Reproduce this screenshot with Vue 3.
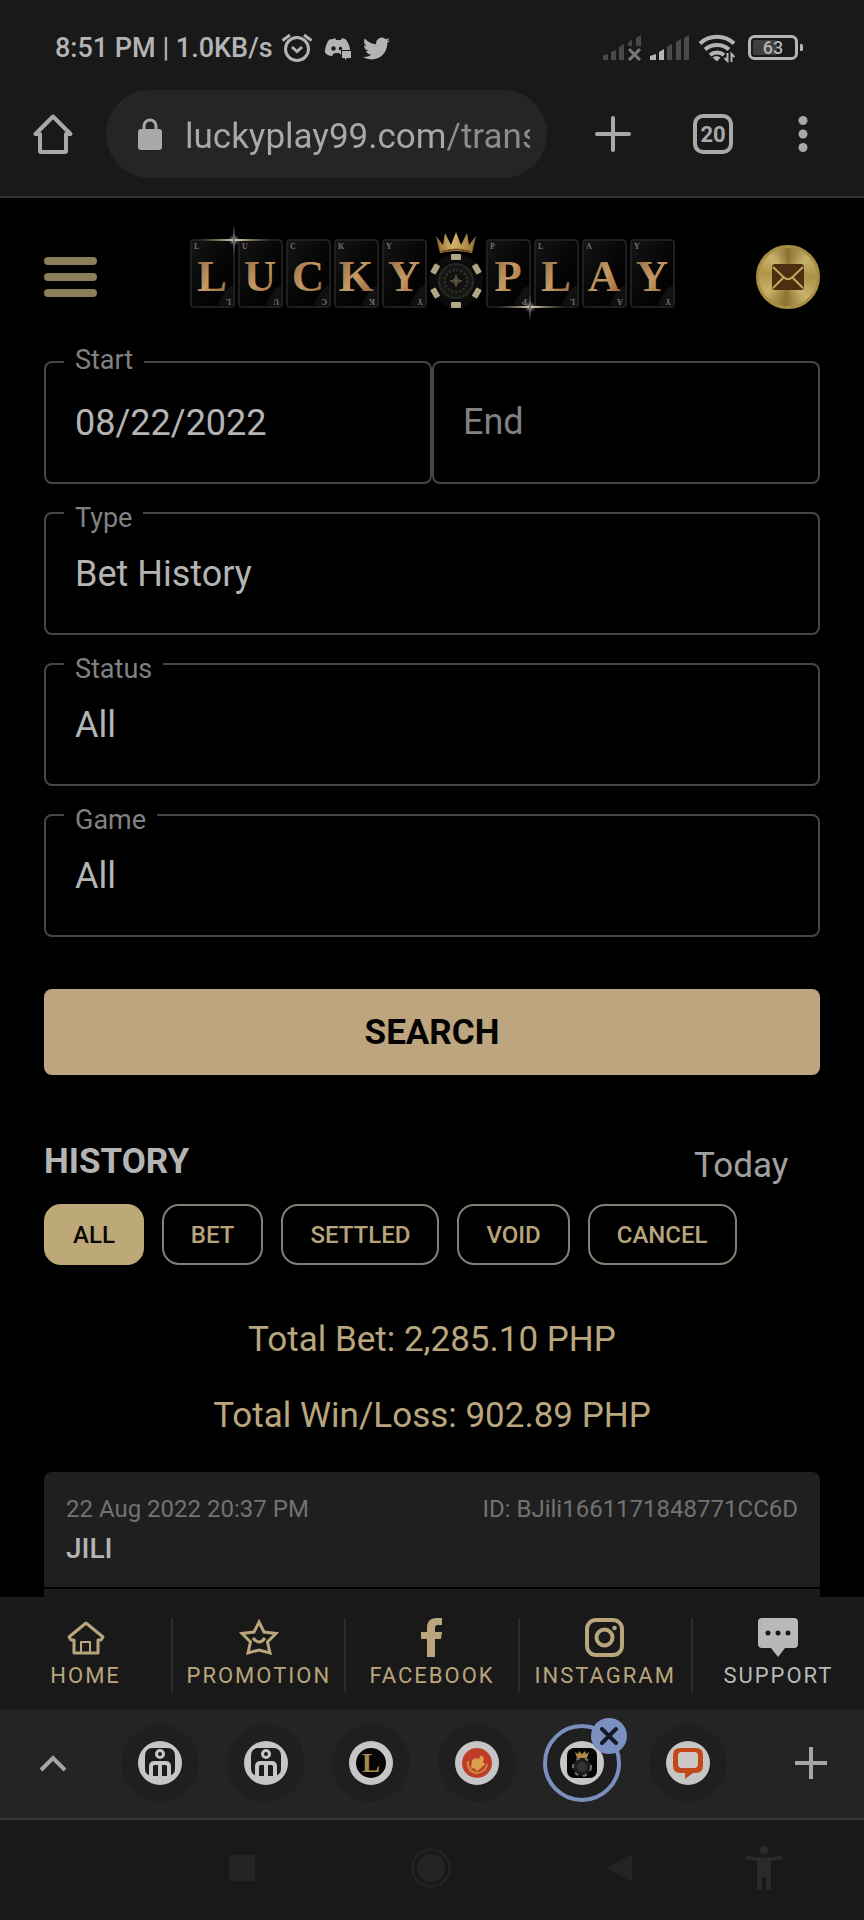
<script setup>
import { ref } from 'vue'

const address = ref('luckyplay99.com/transaction-history')
const start = ref('08/22/2022')
const end = ref('')
const period = ref('Today')

const selects = ref([
  { id: 'type', label: 'Type', value: 'Bet History', options: ['Bet History', 'Deposit', 'Withdrawal'] },
  { id: 'status', label: 'Status', value: 'All', options: ['All', 'Settled', 'Pending'] },
  { id: 'game', label: 'Game', value: 'All', options: ['All', 'JILI'] },
])

const filters = ['ALL', 'BET', 'SETTLED', 'VOID', 'CANCEL']
const activeFilter = ref('ALL')

const totals = [
  { label: 'Total Bet', amount: '2,285.10 PHP' },
  { label: 'Total Win/Loss', amount: '902.89 PHP' },
]

const bets = [
  { date: '22 Aug 2022 20:37 PM', id: 'BJili1661171848771CC6D', provider: 'JILI' },
]

const links = ['HOME', 'PROMOTION', 'FACEBOOK', 'INSTAGRAM', 'SUPPORT']

const tabs = [
  { id: 1, kind: 'person', title: 'Community' },
  { id: 2, kind: 'person', title: 'Community' },
  { id: 3, kind: 'letter', title: 'Lucky' },
  { id: 4, kind: 'seal', title: 'Seal' },
  { id: 5, kind: 'chip', title: 'Lucky Play' },
  { id: 6, kind: 'chat', title: 'Live chat' },
]
const activeTab = ref(5)

// cards of the logo, the poker chip sits in the gap between the two words
const cards = [...'LUCKY'].map((letter, i) => ({ letter, x: 2 + i * 48 }))
  .concat([...'PLAY'].map((letter, i) => ({ letter, x: 298 + i * 48 })))

const chipMarks = [0, 60, 120, 180, 240, 300]
</script>

<template>
  <div class="screen">
    <header class="browser">
      <div class="status-bar">
        <div class="status-left">
          <span>8:51 PM | 1.0KB/s</span>
          <svg width="32" height="30" viewBox="0 0 32 30" fill="none" stroke="currentColor" stroke-width="3">
            <circle cx="16" cy="16" r="11.5" />
            <path d="M1.500 7.500 9 2M30.500 7.500 23 2" />
            <path d="m11 14 5 4.500 5-4.500" />
          </svg>
          <svg class="discord" width="26" height="23" viewBox="0 0 26 23" fill="currentColor">
            <path d="M8 2 10 1l1 2h5l1-2 4 1.500C23.500 6 25 10 25 13h-9v5l-2-2-5 .200L7 19C4 19 1.500 17.500 0 15.500 0 10.500 2 4.500 4.500 2.500z" />
            <path d="M17 14h9v7h-4l-2 2v-2h-3z" />
            <circle cx="8.500" cy="11.500" r="2.200" fill="#191919" />
            <circle cx="15.500" cy="11.500" r="1.800" fill="#191919" />
          </svg>
          <svg class="twitter" width="27" height="23" viewBox="0 2 24 20" fill="currentColor">
            <path d="M23.950 4.570a10 10 0 0 1-2.820.770 4.960 4.960 0 0 0 2.160-2.720 9.900 9.900 0 0 1-3.120 1.180 4.920 4.920 0 0 0-8.380 4.480C7.690 8.090 4.070 6.130 1.640 3.160a4.820 4.820 0 0 0-.670 2.480c0 1.710.870 3.210 2.190 4.100a4.900 4.900 0 0 1-2.230-.620v.060a4.920 4.920 0 0 0 3.950 4.830 5 5 0 0 1-2.210.080 4.940 4.940 0 0 0 4.600 3.420A9.870 9.870 0 0 1 0 19.540a14 14 0 0 0 7.550 2.210c9.050 0 14-7.500 14-13.980 0-.210 0-.420-.020-.630a9.940 9.940 0 0 0 2.420-2.570z" />
          </svg>
        </div>
        <div class="status-right">
          <svg width="40" height="26" viewBox="0 0 40 26" fill="#484848">
            <path d="M1 20.500 6 19v6H1zM9 17l5-2v10H9zM17 12l5-3v16h-5zM26 8l4-4v7h-4zM34 3l5-3v11h-5z" />
            <path d="m27 14 11 11m0-11L27 25" stroke="#777" stroke-width="3" />
          </svg>
          <svg width="40" height="26" viewBox="0 0 40 26">
            <path d="M0 21 6 19v6H0zM9 17l5-3v11H9z" fill="#b5b5b5" />
            <path d="m17 12 5-3v16h-5zM26 7l5-3v21h-5zM34 3l5-3v25h-5z" fill="#4a4a4a" />
          </svg>
          <svg width="38" height="30" viewBox="0 0 38 30" fill="none" stroke="currentColor" stroke-width="4">
            <path d="M2 10.500a25 25 0 0 1 34 0M7 16.500a18 18 0 0 1 24 0M12 22a11 11 0 0 1 14 0" />
            <path d="m14.500 24.500 4.500 4 3.500-4a6 6 0 0 0-8 0z" fill="currentColor" stroke="none" />
            <path d="M29.500 20v8l-3-3M33.500 29v-8l3 3" stroke-width="2" />
          </svg>
          <svg class="battery" width="56" height="26" viewBox="0 0 56 26">
            <rect x="1.500" y="1.500" width="47" height="22" rx="5" fill="none" stroke="currentColor" stroke-width="3" />
            <rect x="5" y="5" width="24" height="15" rx="2" fill="#3f3f3f" />
            <path d="M52 9h1.500q1.500 0 1.500 1.500v4q0 1.500-1.500 1.500H52z" fill="currentColor" />
            <text x="25" y="19" text-anchor="middle" fill="currentColor">63</text>
          </svg>
        </div>
      </div>

      <div class="toolbar">
        <button class="icon-button" aria-label="Home page">
          <svg width="40" height="40" viewBox="0 0 40 40" fill="none" stroke="currentColor" stroke-width="4" stroke-linejoin="round">
            <path d="M20 2.500 2.500 20H7v17q0 1 1 1h24q1 0 1-1V20h4.500z" />
          </svg>
        </button>
        <div class="address">
          <svg width="26" height="32" viewBox="0 0 26 32" fill="currentColor">
            <rect x="1" y="11" width="24" height="21" rx="3" />
            <path d="M7 12V8a6 6 0 0 1 12 0v4" fill="none" stroke="currentColor" stroke-width="3" />
          </svg>
          <input v-model="address" type="text" aria-label="Address" />
        </div>
        <div class="toolbar-actions">
          <button class="icon-button" aria-label="New tab">
            <svg width="36" height="36" viewBox="0 0 36 36" stroke="currentColor" stroke-width="4" stroke-linecap="round">
              <path d="M18 2v32M2 18h32" />
            </svg>
          </button>
          <button class="icon-button tab-count" aria-label="20 open tabs"><span>20</span></button>
          <button class="icon-button menu-dots" aria-label="Menu">
            <svg width="20" height="36" viewBox="0 0 20 36" fill="currentColor">
              <circle cx="10" cy="4.500" r="4.500" />
              <circle cx="10" cy="18" r="4.500" />
              <circle cx="10" cy="31.500" r="4.500" />
            </svg>
          </button>
        </div>
      </div>
    </header>

    <main class="page">
      <div class="site-header">
        <button class="hamburger" aria-label="Open menu"><i /><i /><i /></button>

        <svg class="logo" width="488" height="100" viewBox="0 0 488 100" role="img" aria-label="Lucky Play">
          <defs>
            <linearGradient id="gold" x1="0" y1="0" x2="1" y2="1">
              <stop offset="0" stop-color="#8a5f3c" />
              <stop offset="0.500" stop-color="#c69a64" />
              <stop offset="1" stop-color="#8c5c34" />
            </linearGradient>
            <linearGradient id="card" x1="0" y1="0" x2="1" y2="1">
              <stop offset="0" stop-color="#151515" />
              <stop offset="0.550" stop-color="#050505" />
              <stop offset="0.800" stop-color="#020202" />
              <stop offset="1" stop-color="#141414" />
            </linearGradient>
            <linearGradient id="crown" x1="0" y1="0" x2="1" y2="0">
              <stop offset="0" stop-color="#8c6528" />
              <stop offset="0.400" stop-color="#d6b56a" />
              <stop offset="1" stop-color="#94702e" />
            </linearGradient>
            <linearGradient id="streak">
              <stop offset="0" stop-color="#a58a55" stop-opacity="0" />
              <stop offset="0.500" stop-color="#e8dcc0" />
              <stop offset="1" stop-color="#a58a55" stop-opacity="0" />
            </linearGradient>
            <radialGradient id="glow">
              <stop offset="0" stop-color="#fff" />
              <stop offset="0.300" stop-color="#bbb" stop-opacity="0.600" />
              <stop offset="1" stop-color="#888" stop-opacity="0" />
            </radialGradient>
          </defs>
          <g v-for="card in cards" :key="card.x">
            <rect :x="card.x + 1" y="13" width="43" height="67" rx="3" fill="url(#card)" stroke="#1f1f1f" stroke-width="2" />
            <path :d="`M${card.x + 28} 78q6-16 15-20v20z`" fill="#111" />
            <text class="card-letter" :x="card.x + 22" y="64" text-anchor="middle">{{ card.letter }}</text>
            <text class="card-corner" :x="card.x + 4" y="22">{{ card.letter }}</text>
            <text class="card-corner" :transform="`rotate(180 ${card.x + 41} 72)`" :x="card.x + 41" y="72">{{ card.letter }}</text>
          </g>
          <g>
            <circle cx="268" cy="54" r="27" fill="#0b0b0b" />
            <rect
              v-for="angle in chipMarks" :key="angle"
              x="263" y="27" width="10" height="6" rx="1"
              fill="#b0a684" :transform="`rotate(${angle} 268 54)`"
            />
            <circle cx="268" cy="54" r="17" fill="#171717" stroke="#262626" stroke-width="2" />
            <circle cx="268" cy="54" r="11" fill="#121210" stroke="#3b3528" stroke-width="2" stroke-dasharray="2 2" />
            <path d="m268 47 2 5 5 2-5 2-2 5-2-5-5-2 5-2z" fill="#554d3c" />
            <path d="M252 26 248 9l7 9 2-12 6 12 5-13 5 13 6-12 2 12 7-9-4 17q-16-4-32 0z" fill="url(#crown)" />
            <path d="M253 25q15-5 30 0" stroke="#7a4c22" stroke-width="2" fill="none" />
          </g>
          <rect x="10" y="12" width="74" height="2" fill="url(#streak)" />
          <circle cx="46" cy="13" r="6" fill="url(#glow)" />
          <path d="M46-4 47 13 46 28 45 13z" fill="#6d6d6d" />
          <rect x="310" y="79" width="66" height="2" fill="url(#streak)" />
          <circle cx="342" cy="80" r="6" fill="url(#glow)" />
          <path d="m342 68 1 12-1 14-1-14z" fill="#6d6d6d" />
        </svg>

        <button class="mail" aria-label="Messages">
          <svg width="32" height="26" viewBox="0 0 32 26">
            <rect width="32" height="26" rx="3" fill="#4c2e10" />
            <path d="m1 3 11 10.500q4 3.500 8 0L31 3M1 24l11-11M31 24 20 13" fill="none" stroke="#c2a85b" stroke-width="2" />
          </svg>
        </button>
      </div>

      <form class="search-form" @submit.prevent>
        <div class="date-range">
          <div class="field">
            <label for="start" class="field-label">Start</label>
            <input id="start" v-model="start" type="text" />
          </div>
          <div class="field">
            <label for="end" class="field-label resting">End</label>
            <input id="end" v-model="end" type="text" />
          </div>
        </div>
        <div v-for="item in selects" :key="item.id" class="field">
          <label :for="item.id" class="field-label lowered">{{ item.label }}</label>
          <select :id="item.id" v-model="item.value">
            <option v-for="option in item.options" :key="option">{{ option }}</option>
          </select>
        </div>
        <button type="submit" class="search-button">SEARCH</button>
      </form>

      <section>
        <div class="history-head">
          <h2>HISTORY</h2>
          <select v-model="period" aria-label="Period">
            <option>Today</option>
            <option>Week</option>
          </select>
        </div>
        <div class="filters">
          <button
            v-for="filter in filters" :key="filter"
            :class="{ active: filter === activeFilter }"
            @click="activeFilter = filter"
          >{{ filter }}</button>
        </div>
        <div class="totals">
          <p v-for="total in totals" :key="total.label">{{ total.label }}: {{ total.amount }}</p>
        </div>
        <article v-for="bet in bets" :key="bet.id" class="bet">
          <div class="bet-head">
            <div class="bet-meta">
              <span>{{ bet.date }}</span>
              <span>ID: {{ bet.id }}</span>
            </div>
            <h3>{{ bet.provider }}</h3>
          </div>
          <div class="bet-body" />
        </article>
      </section>
    </main>

    <nav class="site-nav">
      <a v-for="link in links" :key="link" href="#" :class="{ support: link === 'SUPPORT' }">
        <svg v-if="link === 'HOME'" width="40" height="40" viewBox="0 0 40 40" fill="none" stroke="currentColor" stroke-width="3" stroke-linejoin="round">
          <path d="M20 5 3 19l2 3h3v13h24V22h3l2-3z" />
          <path d="M15 35V24h9v11" stroke-width="2" />
        </svg>
        <svg v-else-if="link === 'PROMOTION'" width="40" height="40" viewBox="0 0 40 40" fill="none" stroke="currentColor" stroke-width="3">
          <path d="m20 4 5 10 12 1.500-8.500 8.500 2.500 11-11-3-11 3 2.500-11L3 15.500 15 14z" />
          <path d="M14 20q6 8 12 0" />
        </svg>
        <svg v-else-if="link === 'FACEBOOK'" width="40" height="40" viewBox="0 0 40 40" fill="currentColor">
          <path d="M15 39V21H9v-7h6v-4q0-10 9-10h6v7h-4q-3 0-3 3v4h7l-1 7h-6v18z" />
        </svg>
        <svg v-else-if="link === 'INSTAGRAM'" width="40" height="40" viewBox="0 0 40 40" fill="none" stroke="currentColor" stroke-width="4">
          <rect x="2" y="2" width="35" height="35" rx="9" />
          <circle cx="19.500" cy="19.500" r="8" />
          <circle cx="29.500" cy="10" r="2.300" fill="currentColor" stroke="none" />
        </svg>
        <svg v-else width="42" height="40" viewBox="0 0 42 40" fill="currentColor">
          <path d="M5 0h32q4 0 4 4v22q0 4-4 4h-9l-7 9-7-9H5q-4 0-4-4V4q0-4 4-4z" />
          <g fill="#191919">
            <circle cx="11" cy="15" r="2.500" />
            <circle cx="21" cy="15" r="2.500" />
            <circle cx="31" cy="15" r="2.500" />
          </g>
        </svg>
        <span>{{ link }}</span>
      </a>
    </nav>

    <div class="tab-strip">
      <button class="icon-button" aria-label="Show all tabs">
        <svg width="28" height="18" viewBox="0 0 28 18" fill="none" stroke="currentColor" stroke-width="4">
          <path d="m2 16 12-12 12 12" />
        </svg>
      </button>
      <div class="tabs">
        <div v-for="tab in tabs" :key="tab.id" class="tab" :class="{ current: tab.id === activeTab }">
          <button class="tab-button" :aria-label="tab.title" @click="activeTab = tab.id">
            <svg width="44" height="44" viewBox="0 0 44 44">
              <circle cx="22" cy="22" r="22" fill="#c6c6c6" />
              <template v-if="tab.kind === 'person'">
                <rect x="7" y="7" width="30" height="28" rx="7" fill="#1c1c1c" />
                <g fill="none" stroke="#c6c6c6">
                  <circle cx="22" cy="13" r="3.500" stroke-width="3" />
                  <path d="M13 36V25.500q0-3.500 3.500-3.500h11q3.500 0 3.500 3.500V36M22 22v14" stroke-width="4" />
                </g>
              </template>
              <template v-else-if="tab.kind === 'letter'">
                <circle cx="22" cy="22" r="15" fill="#050505" />
                <text class="favicon-letter" x="22" y="31" text-anchor="middle">L</text>
              </template>
              <template v-else-if="tab.kind === 'seal'">
                <circle cx="22" cy="22" r="15" fill="#bf3c28" />
                <path d="M13 20q-1 11 9 12 9-1 10-9" fill="none" stroke="#c98a35" stroke-width="2" />
                <path d="m17 19 4-2 3 1 2-4 3 3-1 4 2 2-4 4-4 3-3-3-3 1z" fill="#d9a04a" />
              </template>
              <template v-else-if="tab.kind === 'chip'">
                <rect x="7" y="7" width="30" height="30" rx="7" fill="#050505" />
                <path d="m17 17-2-6 3 2 1-3 3 3 3-3 1 3 3-2-2 6z" fill="#b08a45" />
                <circle cx="22" cy="26" r="9" fill="#1d1d1d" stroke="#77736a" stroke-width="2" stroke-dasharray="4 5" />
                <circle cx="22" cy="26" r="5" fill="#333" />
              </template>
              <template v-else>
                <path d="M14 7h16q7 0 7 7v11q0 7-7 7h-3l-8 6v-6h-5q-7 0-7-7V14q0-7 7-7z" fill="#c2491c" />
                <rect x="12" y="11" width="20" height="16" rx="4" fill="#cbc8c5" />
              </template>
            </svg>
          </button>
          <button v-if="tab.id === activeTab" class="tab-close" aria-label="Close tab">
            <svg width="18" height="18" viewBox="0 0 18 18" stroke="#161b26" stroke-width="4" stroke-linecap="round">
              <path d="m2 2 14 14M16 2 2 16" />
            </svg>
          </button>
        </div>
      </div>
      <button class="icon-button" aria-label="New tab in group">
        <svg width="32" height="32" viewBox="0 0 32 32" stroke="currentColor" stroke-width="4">
          <path d="M16 0v32M0 16h32" />
        </svg>
      </button>
    </div>

    <div class="system-nav">
      <button aria-label="Recent apps">
        <svg width="26" height="26" viewBox="0 0 26 26" fill="currentColor"><rect width="26" height="26" /></svg>
      </button>
      <button aria-label="Home screen">
        <svg width="40" height="40" viewBox="0 0 40 40" fill="currentColor">
          <circle cx="20" cy="20" r="18.500" fill="none" stroke="currentColor" stroke-width="2" />
          <circle cx="20" cy="20" r="14" />
        </svg>
      </button>
      <button aria-label="Back">
        <svg width="28" height="30" viewBox="0 0 28 30" fill="currentColor"><path d="M1 15 26 1v28z" /></svg>
      </button>
      <button class="accessibility" aria-label="Accessibility">
        <svg width="40" height="46" viewBox="0 0 40 46" fill="currentColor">
          <circle cx="20" cy="5" r="4.500" />
          <path d="M1 10q19 5 38 0v4l-12 2v29h-5V32h-4v13h-5V16L1 14z" />
        </svg>
      </button>
    </div>
  </div>
</template>

<style>
html,
body {
  background: #000;
}
</style>

<style scoped>
.screen {
  display: flex;
  flex-direction: column;
  height: 100vh;
  background: #000;
  color: #b4b4b4;
  font-family: Roboto, "Liberation Sans", sans-serif;
  font-size: 35px;
}

.screen * {
  box-sizing: border-box;
}

svg {
  display: block;
  flex-shrink: 0;
}

button,
input,
select {
  margin: 0;
  padding: 0;
  border: 0;
  outline: 0;
  background: none;
  color: inherit;
  font: inherit;
  appearance: none;
}

.icon-button {
  display: flex;
  align-items: center;
  justify-content: center;
  width: 40px;
  height: 40px;
  flex-shrink: 0;
}

/* browser chrome */
.browser {
  background: #191919;
  border-bottom: 2px solid #333;
}

.status-bar {
  display: flex;
  align-items: center;
  justify-content: space-between;
  height: 90px;
  padding: 6px 60px 0 55px;
  font-size: 27px;
  font-weight: 500;
}

.status-left,
.status-right {
  display: flex;
  align-items: center;
  gap: 8px;
}

.discord {
  margin-left: 4px;
}

.twitter {
  margin-left: 4px;
}

.battery {
  margin-left: 4px;
  font-size: 18px;
}

.toolbar {
  display: flex;
  align-items: center;
  padding: 0 51px 18px 33px;
  color: #a9a9a9;
}

.address {
  display: flex;
  align-items: center;
  flex: 1;
  min-width: 0;
  height: 88px;
  margin: 0 46px 0 33px;
  padding: 0 17px 0 31px;
  gap: 22px;
  border-radius: 44px;
  background: #252525;
}

.address input {
  flex: 1;
  min-width: 0;
  height: 52px;
  padding-top: 4px;
  background: linear-gradient(90deg, #a9a9a9 260px, #8c8c8c 260px);
  background-clip: text;
  -webkit-text-fill-color: transparent;
}

.toolbar-actions {
  display: flex;
  gap: 60px;
}

.tab-count {
  border: 4px solid currentColor;
  border-radius: 10px;
  font-size: 22px;
  font-weight: 700;
}

.menu-dots {
  width: 20px;
}

/* page */
.page {
  flex: 1;
  min-height: 0;
  overflow: hidden;
  padding: 0 44px;
}

.site-header {
  display: grid;
  grid-template-columns: 1fr auto 1fr;
  align-items: center;
  padding: 29px 0 34px;
}

.hamburger {
  display: flex;
  flex-direction: column;
  gap: 8px;
  width: 53px;
}

.hamburger i {
  height: 8px;
  border-radius: 4px;
  background: #8b7d58;
}

.card-letter {
  font: 700 45px "Liberation Serif", serif;
  fill: url(#gold);
}

.card-corner {
  font: 700 8px "Liberation Serif", serif;
  fill: #77706a;
}

.mail {
  display: flex;
  align-items: center;
  justify-content: center;
  justify-self: end;
  width: 64px;
  height: 64px;
  border: 3px solid #a88d45;
  border-radius: 50%;
  background: conic-gradient(#8e7132, #c7b068 45deg, #ad9247 90deg, #c9b36c 140deg, #8f7030 185deg, #c8b168 235deg, #b19549 280deg, #c9b46e 320deg, #8e7132);
}

.search-form {
  display: flex;
  flex-direction: column;
  gap: 28px;
}

.date-range {
  display: grid;
  grid-template-columns: 1fr 1fr;
}

.field {
  position: relative;
  height: 123px;
  border: 2px solid #464646;
  border-radius: 8px;
  font-size: 36px;
}

.field input,
.field select {
  width: 100%;
  height: 100%;
  padding: 0 29px;
}

.field-label {
  position: absolute;
  top: -18px;
  left: 18px;
  padding: 0 11px;
  background: #000;
  color: #818181;
  font-size: 27px;
  line-height: 30px;
  pointer-events: none;
}

.field-label.lowered {
  top: -11px;
}

.field-label.resting {
  top: 38px;
  font-size: 36px;
  line-height: 42px;
}

.search-button {
  height: 86px;
  margin-top: 24px;
  border-radius: 8px;
  background: #bda67f;
  color: #050202;
  font-weight: 700;
}

.history-head {
  display: flex;
  justify-content: space-between;
  height: 46px;
  margin: 66px 0 17px;
  line-height: 42px;
}

.history-head h2 {
  margin: 0;
  font-size: 35px;
  font-weight: 700;
}

.history-head select {
  align-self: flex-end;
  padding-right: 31px;
  color: #a0a0a0;
}

.filters {
  display: flex;
  gap: 18px;
}

.filters button {
  height: 61px;
  padding: 0 27px;
  border: 2px solid #857e75;
  border-radius: 17px;
  color: #b8a47b;
  font-size: 24px;
  font-weight: 500;
}

.filters .active {
  border-color: #bda878;
  background: #bda878;
  color: #0c0805;
}

.totals {
  margin: 37px 0 18px;
  color: #b9a67e;
  line-height: 76px;
  text-align: center;
}

.totals p {
  margin: 0;
}

.bet-head {
  padding: 17px 22px 18px;
  border-radius: 8px 8px 0 0;
  background: #1f1f1f;
  line-height: 40px;
}

.bet-meta {
  display: flex;
  justify-content: space-between;
  color: #727272;
  font-size: 24px;
}

.bet-head h3 {
  margin: 0;
  font-size: 28px;
  font-weight: 500;
}

.bet-body {
  height: 80px;
  margin-top: 2px;
  background: #1b1b1b;
}

/* site navigation */
.site-nav {
  display: flex;
  padding: 21px 0 17px;
  background: #191919;
}

.site-nav a {
  display: flex;
  flex: 1;
  flex-direction: column;
  align-items: center;
  gap: 2px;
  color: #b9a67c;
  font-size: 22px;
  letter-spacing: 2px;
  line-height: 32px;
  text-decoration: none;
}

.site-nav a + a {
  border-left: 2px solid #2b2b2b;
}

.site-nav .support {
  color: #b8b8b8;
}

/* tab strip */
.tab-strip {
  display: flex;
  align-items: center;
  padding: 15px 33px 16px;
  border-bottom: 2px solid #353535;
  background: #242424;
  color: #a6a6a6;
}

.tabs {
  display: flex;
  flex: 1;
  justify-content: space-between;
  margin: 0 64px 0 48px;
}

.tab {
  position: relative;
}

.tab-button {
  display: flex;
  align-items: center;
  justify-content: center;
  width: 78px;
  height: 78px;
  border-radius: 50%;
  background: #1f1f1f;
}

.current .tab-button {
  border: 4px solid #7b90bf;
}

.tab-close {
  position: absolute;
  top: -6px;
  right: -6px;
  display: flex;
  align-items: center;
  justify-content: center;
  width: 36px;
  height: 36px;
  border-radius: 50%;
  background: #7b90bf;
}

.favicon-letter {
  font: 700 27px "Liberation Serif", serif;
  fill: #a28b4c;
}

/* system buttons */
.system-nav {
  display: flex;
  height: 100px;
  padding: 0 50px 4px 148px;
  background: #191919;
  color: #242424;
}

.system-nav button {
  display: flex;
  flex: 1;
  align-items: center;
  justify-content: center;
}

.system-nav .accessibility {
  flex: 0 0 100px;
  color: #2a2a2a;
}
</style>
